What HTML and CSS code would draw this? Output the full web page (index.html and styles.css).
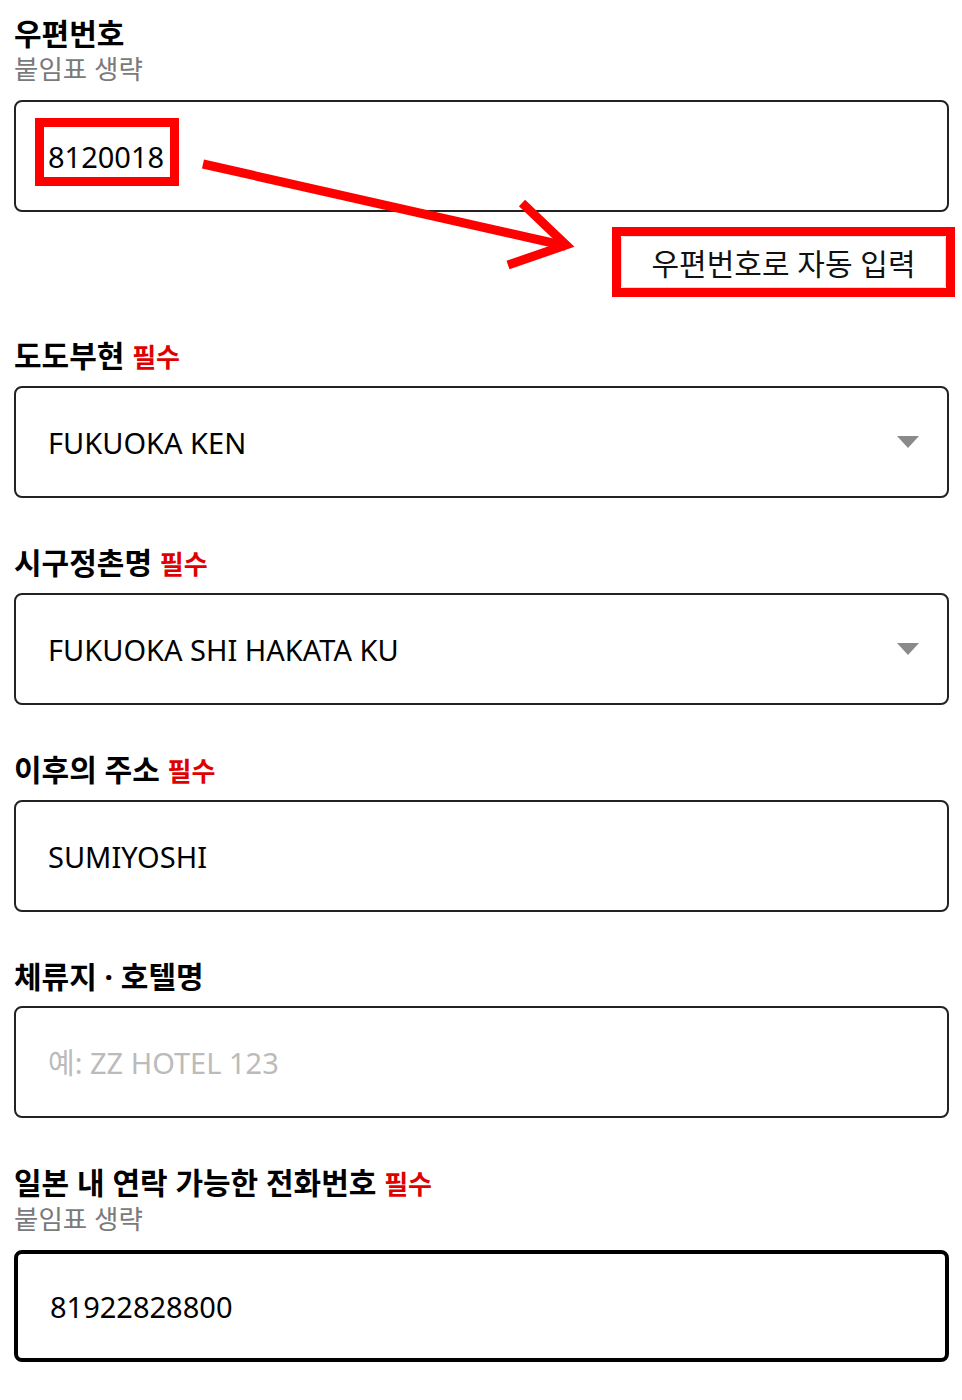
FILE: index.html
```html
<!DOCTYPE html>
<html lang="ko">
<head>
  <meta charset="UTF-8"/>
  <meta name="viewport" content="width=device-width,initial-scale=1.0"/>
  <title>주소 입력</title>
  <link rel="stylesheet" href="styles.css">
</head>
<body>
  <form class="form">
    <div class="field zip">
      <label class="label" for="zip">우편번호</label>
      <div class="hint">붙임표 생략</div>
      <div class="input-wrap">
        <input class="input" id="zip" type="text" value="8120018"/>
        <span class="mark mark-zip"></span>
      </div>
      <div class="auto-row">
        <span class="mark-btn"><button type="button" class="auto-btn">우편번호로 자동 입력</button></span>
      </div>
      <svg class="arrow" viewBox="0 0 962 300" width="962" height="300">
        <line x1="203" y1="164" x2="566" y2="246" stroke="#ff0000" stroke-width="9"/>
        <polyline points="522,203 566,245 508,265" fill="none" stroke="#ff0000" stroke-width="9" stroke-linejoin="miter" stroke-miterlimit="10"/>
      </svg>
    </div>

    <div class="field">
      <label class="label" for="pref">도도부현 <span class="req">필수</span></label>
      <div class="select-wrap">
        <select class="input select" id="pref">
          <option>FUKUOKA KEN</option>
        </select>
      </div>
    </div>

    <div class="field">
      <label class="label" for="city">시구정촌명 <span class="req">필수</span></label>
      <div class="select-wrap">
        <select class="input select" id="city">
          <option>FUKUOKA SHI HAKATA KU</option>
        </select>
      </div>
    </div>

    <div class="field">
      <label class="label" for="addr">이후의 주소 <span class="req">필수</span></label>
      <input class="input" id="addr" type="text" value="SUMIYOSHI"/>
    </div>

    <div class="field">
      <label class="label" for="hotel">체류지 · 호텔명</label>
      <input class="input" id="hotel" type="text" placeholder="예: ZZ HOTEL 123"/>
    </div>

    <div class="field">
      <label class="label" for="tel">일본 내 연락 가능한 전화번호 <span class="req">필수</span></label>
      <div class="hint">붙임표 생략</div>
      <input class="input focus" id="tel" type="tel" value="81922828800"/>
    </div>
  </form>
</body>
</html>
```

FILE: styles.css
```css
body { margin:0; background:#fff; color:#000; font-family:"Noto Sans","Noto Sans CJK KR",sans-serif; }
.form { width:935px; margin:0 0 0 14px; padding-top:13px; }
.field { position:relative; display:flex; flex-direction:column; margin-bottom:44px; }
.label { font-size:30px; font-weight:700; line-height:42px; margin-bottom:8px; }
.req { color:#e00000; font-size:26px; }
.hint { font-size:26.5px; color:#7a7a7a; line-height:36px; margin:-12px 0 13px; }
.input {
  box-sizing:border-box; width:100%; height:112px; margin:0;
  border:2px solid #222; border-radius:8px; background:#fff;
  padding:0 32px; font-family:inherit; font-size:29px; color:#000; outline:none;
}
.input::placeholder { color:#bbb; }
.input.focus { border-width:4px; border-color:#000; padding-left:32px; }
.select { appearance:none; -webkit-appearance:none; }
.select-wrap { position:relative; }
.select-wrap::after {
  content:""; position:absolute; right:30px; top:50%; margin-top:-6px;
  border-left:11px solid transparent; border-right:11px solid transparent; border-top:12px solid #8a8a8a;
}
.input-wrap { position:relative; }
.mark { position:absolute; border:9px solid #ff0000; }
.mark-zip { left:21px; top:18px; width:126px; height:50px; }
.auto-row { display:flex; justify-content:flex-end; margin:15px -6px 0 0; }
.mark-btn { display:block; border:9px solid #ff0000; }
.auto-btn {
  display:block; width:325px; height:52px; margin:0; padding:0;
  border:1px solid #ddd; border-radius:3px; background:#fff;
  font-family:inherit; font-size:30px; color:#111; cursor:pointer;
}
.zip { margin-bottom:38px; }
.arrow { position:absolute; left:-14px; top:-13px; pointer-events:none; }
```
